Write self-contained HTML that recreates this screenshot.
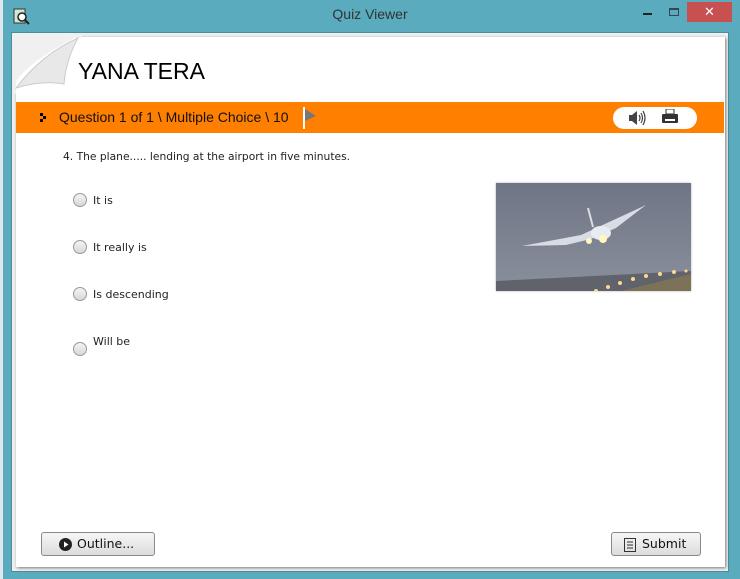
<!DOCTYPE html>
<html><head><style>
*{margin:0;padding:0;box-sizing:border-box}
body{width:740px;height:579px;overflow:hidden;background:#5aabbd;font-family:"Liberation Sans",sans-serif;position:relative}
.desk{position:absolute;left:0;top:0;width:3px;height:579px;background:#dfe6ec}
.title{position:absolute;left:0;top:6px;width:740px;text-align:center;font-size:14px;color:#333}
.client{position:absolute;left:11px;top:32px;width:718px;height:540px;background:#f0f0f0;border:1px solid #4a8d9c}
.card{position:absolute;left:16px;top:37px;width:709px;height:530px;background:#fff;box-shadow:1px 1px 3px rgba(0,0,0,.5)}
.bar{position:absolute;left:16px;top:102px;width:708px;height:31px;background:#ff7f00}
.q{position:absolute;left:59px;top:109px;font-size:14px;color:#111}
.pill{position:absolute;left:613px;top:107px;width:84px;height:22px;background:#fff;border-radius:11px}
.opt{position:absolute;left:93px;font-family:"DejaVu Sans",sans-serif;font-size:11px;color:#222}
.rad{position:absolute;left:73px;width:14px;height:14px;border-radius:50%;border:1px solid #999;background:linear-gradient(#f4f4f4,#d8d8d8)}
.btn{position:absolute;top:532px;height:24px;border:1px solid #8a8a8a;border-radius:3px;background:linear-gradient(#f6f6f6,#dcdcdc);font-family:"DejaVu Sans",sans-serif;font-size:12.5px;color:#111}
</style></head><body>
<div class="desk"></div>
<svg style="position:absolute;left:12px;top:8px" width="18" height="17"><rect x="2" y="1" width="11" height="14" fill="#cfe8cf" stroke="#333"/><circle cx="10" cy="9" r="4" fill="#fff" stroke="#222" stroke-width="1.5"/><line x1="13" y1="12" x2="17" y2="16" stroke="#222" stroke-width="2"/></svg>
<div class="title">Quiz Viewer</div>
<div style="position:absolute;left:643px;top:13px;width:9px;height:2px;background:#222"></div>
<div style="position:absolute;left:669px;top:8px;width:10px;height:8px;border:1px solid #345;border-top-width:2px"></div>
<div style="position:absolute;left:687px;top:2px;width:45px;height:20px;background:#c75050;color:#fff;text-align:center;font-size:13px;line-height:20px">✕</div>
<div class="client"></div>
<div class="card"></div>
<svg style="position:absolute;left:12px;top:34px" width="70" height="60"><path d="M4 60 L4 48 Q14 30 62 4 L70 4 L70 0 L0 0 L0 60Z" fill="#f0f0f0"/><path d="M4 54 Q30 46 52 50 Q54 26 66 4 Q30 20 4 54Z" fill="#e8e8e8" stroke="#ccc"/></svg>
<div style="position:absolute;left:78px;top:58px;font-size:23px;color:#000">YANA TERA</div>
<div class="bar"></div>
<svg style="position:absolute;left:40px;top:113px" width="9" height="10"><rect x="0" y="0" width="3" height="3"/><rect x="3" y="3" width="3" height="3"/><rect x="0" y="6" width="3" height="3"/></svg>
<div class="q">Question 1 of 1 \ Multiple Choice \ 10</div>
<svg style="position:absolute;left:302px;top:107px" width="16" height="23"><rect x="1" y="0" width="2" height="22" fill="#fff"/><path d="M3 2 L14 9 L3 14Z" fill="#777"/></svg>
<div class="pill"></div>
<svg style="position:absolute;left:628px;top:110px" width="20" height="16"><path d="M1 5 H4 L9 1 V15 L4 11 H1Z" fill="#444"/><path d="M11 5 Q13 8 11 11 M13 3 Q16 8 13 13 M15 1 Q19 8 15 15" stroke="#444" fill="none" stroke-width="1.2"/></svg>
<svg style="position:absolute;left:662px;top:109px" width="17" height="15"><rect x="4" y="0" width="8" height="5" fill="#fff" stroke="#333"/><rect x="0" y="5" width="16" height="9" rx="1" fill="#333"/><rect x="3" y="10" width="10" height="2" fill="#fff"/></svg>
<div style="position:absolute;left:63px;top:150px;font-family:'DejaVu Sans',sans-serif;font-size:10.7px;color:#222">4. The plane..... lending at the airport in five minutes.</div>
<div class="rad" style="top:193px"></div><div class="opt" style="top:194px">It is</div>
<div class="rad" style="top:240px"></div><div class="opt" style="top:241px">It really is</div>
<div class="rad" style="top:287px"></div><div class="opt" style="top:288px">Is descending</div>
<div class="rad" style="top:342px"></div><div class="opt" style="top:335px">Will be</div>
<svg style="position:absolute;left:496px;top:183px;box-shadow:0 0 2px #aaa" width="195" height="108">
<defs><linearGradient id="s" x1="0" y1="0" x2="0" y2="1"><stop offset="0" stop-color="#6f7585"/><stop offset="1" stop-color="#8a8f9c"/></linearGradient></defs>
<rect width="195" height="108" fill="url(#s)"/>
<path d="M0 98 L195 88 L195 108 L0 108Z" fill="#60636c"/>
<path d="M125 108 L195 91 L195 108Z" fill="#7c7258"/>
<path d="M26 63 L85 52 L150 22 L120 45 L95 56 L70 62Z" fill="#d8dce4"/>
<ellipse cx="105" cy="50" rx="10" ry="7" fill="#e8ebf0"/>
<line x1="97" y1="44" x2="92" y2="25" stroke="#d8dce4" stroke-width="2"/>
<circle cx="107" cy="56" r="4" fill="#fff6c0"/><circle cx="93" cy="58" r="3" fill="#fff6c0"/>
<g fill="#ffd98a"><circle cx="100" cy="108" r="2"/><circle cx="112" cy="104" r="2"/><circle cx="124" cy="100" r="2"/><circle cx="137" cy="96" r="2"/><circle cx="150" cy="93" r="2"/><circle cx="164" cy="91" r="2"/><circle cx="178" cy="89" r="2"/><circle cx="190" cy="88" r="1.5"/></g>
</svg>
<div class="btn" style="left:41px;width:114px"><svg style="position:absolute;left:17px;top:5px" width="13" height="13"><circle cx="6.5" cy="6.5" r="6.5" fill="#222"/><path d="M5 3.5 L9.5 6.5 L5 9.5Z" fill="#fff"/></svg><span style="position:absolute;left:35px;top:3px">Outline...</span></div>
<div class="btn" style="left:611px;width:90px"><svg style="position:absolute;left:12px;top:5px" width="12" height="14"><rect x="0.5" y="0.5" width="11" height="13" fill="none" stroke="#333"/><path d="M3 4H9M3 7H9M3 10H9" stroke="#333"/></svg><span style="position:absolute;left:30px;top:3px">Submit</span></div>
</body></html>
